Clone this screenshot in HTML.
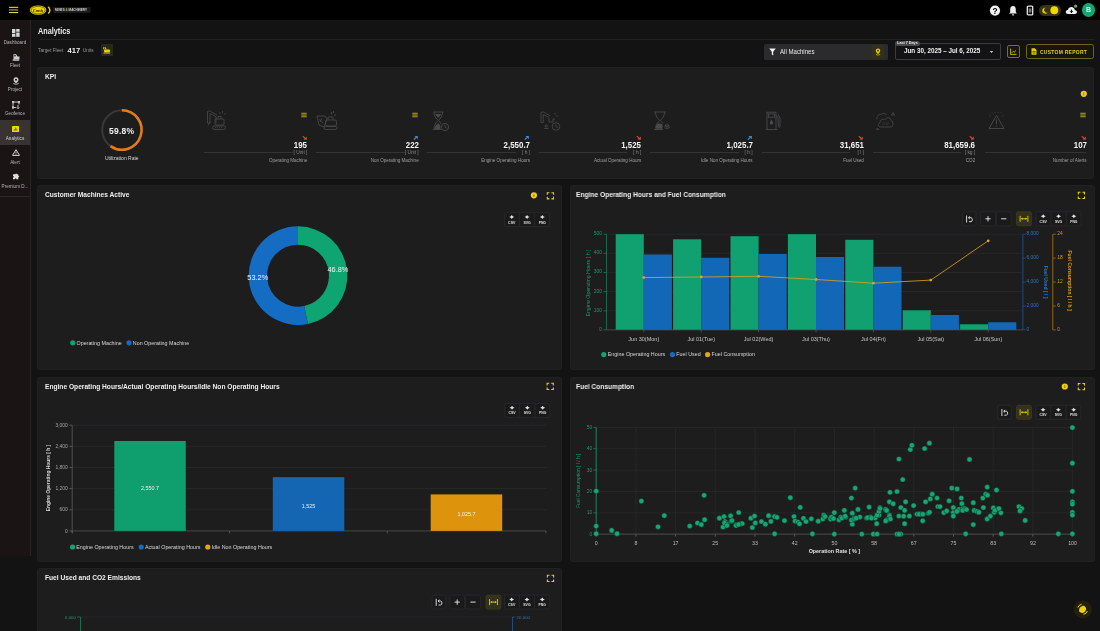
<!DOCTYPE html>
<html><head><meta charset="utf-8">
<style>
*{box-sizing:border-box;margin:0;padding:0}
html,body{width:1100px;height:631px;overflow:hidden;background:#131314;font-family:"Liberation Sans",sans-serif;color:#eee;position:relative}
.abs{position:absolute}
#top{position:absolute;left:0;top:0;width:1100px;height:20px;background:#000}
#side{position:absolute;left:0;top:20px;width:31px;height:536px;background:#1b1516;border-right:1px solid #2a2526}
.slbl{position:absolute;left:0;width:30px;text-align:center;font-size:4.6px;line-height:5px;color:#b8b8b8;white-space:nowrap}
.card{position:absolute;background:#1e1e1f;border:1px solid #222223;border-radius:2.5px}
.ctitle{position:absolute;left:7px;top:5px;font-size:7px;font-weight:bold;color:#f2f2f2;white-space:nowrap}
.kv{position:absolute;width:60px;text-align:right;font-size:9px;font-weight:bold;color:#f4f4f4;white-space:nowrap;transform:scaleX(0.88);transform-origin:100% 0;line-height:10px}
.ku{position:absolute;width:60px;text-align:right;font-size:4.8px;color:#8a8a8a;white-space:nowrap;line-height:6px}
.kl{position:absolute;width:100px;text-align:right;font-size:4.55px;color:#a0a0a0;white-space:nowrap;line-height:6px}
.ct{position:absolute;font-size:6.9px;font-weight:bold;color:#f0f0f0;white-space:nowrap;transform-origin:0 0;line-height:8.4px}
</style></head><body>
<div style="position:absolute;left:0;top:0;width:1100px;height:631px;overflow:hidden;will-change:transform;opacity:0.999">
<div id="top">
 <svg class="abs" style="left:9px;top:6px" width="10" height="8" viewBox="0 0 10 8"><rect x="0" y="0.8" width="9.2" height="1.1" fill="#e6d84e"/><rect x="0" y="3.4" width="9.2" height="1.1" fill="#b5ab45"/><rect x="0" y="6" width="9.2" height="1.1" fill="#e6d84e"/></svg>
 <svg class="abs" style="left:28px;top:4px" width="64" height="12" viewBox="0 0 64 12">
  <ellipse cx="10.1" cy="6.1" rx="8.3" ry="4.7" fill="#f2d600"/>
  <ellipse cx="10.1" cy="6.1" rx="7.1" ry="3.7" fill="none" stroke="#1a1600" stroke-width="0.5"/>
  <text x="10.1" y="7.7" font-size="4.4" font-style="italic" font-weight="bold" fill="#1a1600" text-anchor="middle" font-family="Liberation Serif" textLength="10" lengthAdjust="spacingAndGlyphs">Cmsh</text>
  <path d="M20.2 2.8 Q23.6 6.1 20.2 9.6" stroke="#e2d000" stroke-width="1.5" fill="none"/>
  <rect x="25" y="3.1" width="37.6" height="6" rx="1" fill="#1b1b1b"/>
  <text x="27" y="7.2" font-size="3.1" font-weight="bold" fill="#d6d6d6" font-family="Liberation Sans" textLength="32" lengthAdjust="spacingAndGlyphs">MINES <tspan fill="#b8c040">&amp;</tspan> MACHINERY</text>
 </svg>
 <svg class="abs" style="left:989px;top:5px" width="12" height="12" viewBox="0 0 12 12"><circle cx="6" cy="5.6" r="5.1" fill="#f4f4f4"/><text x="6" y="8.6" font-size="8.4" font-weight="bold" fill="#000" text-anchor="middle" font-family="Liberation Sans">?</text></svg>
 <svg class="abs" style="left:1008px;top:5px" width="10" height="11" viewBox="0 0 10 11"><path d="M5 1 C2.6 1 2.2 3 2.2 5 L2.2 7.3 L1 8.6 L9 8.6 L7.8 7.3 L7.8 5 C7.8 3 7.4 1 5 1Z" fill="#eee"/><rect x="4" y="9.2" width="2" height="1.2" rx="0.6" fill="#eee"/></svg>
 <svg class="abs" style="left:1026px;top:5px" width="8" height="11" viewBox="0 0 8 11"><rect x="1.3" y="1.2" width="5.4" height="8.6" rx="0.9" fill="none" stroke="#e8e8e8" stroke-width="1.3"/><rect x="2.6" y="3.4" width="2.8" height="4.2" fill="#7a7a7a"/></svg>
 <div class="abs" style="left:1039px;top:5px;width:22px;height:10.5px;border-radius:5.5px;background:#3b3612"></div>
 <svg class="abs" style="left:1040px;top:5px" width="20" height="11" viewBox="0 0 20 11"><path d="M5.8 2.8 A3 3 0 1 0 7.6 7.6 A2.4 2.4 0 1 1 5.8 2.8Z" fill="#e8d400"/><circle cx="14.3" cy="5.25" r="3.9" fill="#f2d800"/></svg>
 <svg class="abs" style="left:1065px;top:4px" width="13" height="12" viewBox="0 0 13 12"><path d="M3 10 C1 10 0.6 8.4 0.8 7.6 C1 6.6 2 6 2.9 6.1 C3.2 4 4.8 3 6.4 3 C8.3 3 9.6 4.4 9.8 6 C11 6 12 7 12 8 C12 9.2 11 10 10 10 Z" fill="#f0f0f0"/><path d="M6.4 5.6 L6.4 8.4 M5 7.2 L6.4 8.6 L7.8 7.2" stroke="#000" stroke-width="1" fill="none"/><circle cx="10.6" cy="2.2" r="1.6" fill="#7fa84a"/></svg>
 <div class="abs" style="left:1081.8px;top:3.4px;width:13.4px;height:13.4px;border-radius:50%;background:#16a675;color:#d8f5e6;font-size:7px;font-weight:bold;text-align:center;line-height:14.6px">B</div>
</div>
<div id="side">
 <div class="abs" style="left:0;top:100px;width:30px;height:24.5px;background:#3a3334"></div>
 <div class="abs" style="left:0;top:175.5px;width:30px;height:1px;background:#2e2829"></div>
 <svg class="abs" style="left:11.5px;top:8.5px" width="8" height="8" viewBox="0 0 8 8" fill="#d8d8d8"><rect x="0" y="0" width="3.4" height="4.3"/><rect x="0" y="5" width="3.4" height="2.8"/><rect x="4.2" y="0" width="3.4" height="2.8"/><rect x="4.2" y="3.5" width="3.4" height="4.3"/></svg>
 <div class="slbl" style="top:19.5px">Dashboard</div>
 <svg class="abs" style="left:11.5px;top:32.5px" width="8" height="8" viewBox="0 0 8 8"><path d="M1.5 6 L1.5 1 L4 1 L5.5 3.5 L7.5 3.5 L7.5 6 Z" fill="#cfcfcf"/><rect x="0.5" y="6.2" width="7" height="1.6" rx="0.8" fill="#cfcfcf"/><rect x="2.3" y="1.8" width="1.4" height="1.6" fill="#1b1516"/></svg>
 <div class="slbl" style="top:43.2px">Fleet</div>
 <svg class="abs" style="left:12px;top:56.5px" width="8" height="8" viewBox="0 0 8 8"><path d="M4 0.3 C2.4 0.3 1.5 1.5 1.5 2.8 C1.5 4.5 4 6.5 4 6.5 C4 6.5 6.5 4.5 6.5 2.8 C6.5 1.5 5.6 0.3 4 0.3Z" fill="#d0d0d0"/><circle cx="4" cy="2.8" r="1" fill="#1b1516"/><path d="M1.2 6.4 Q4 8.4 6.8 6.4" stroke="#d0d0d0" stroke-width="0.8" fill="none"/></svg>
 <div class="slbl" style="top:67.3px">Project</div>
 <svg class="abs" style="left:11.5px;top:80.5px" width="8" height="8" viewBox="0 0 8 8" fill="none" stroke="#cfcfcf" stroke-width="0.9"><path d="M1 1 L7 1 M1 1 L1 6.5 M7 1 L7 3.5 M1 6.5 L4 6.5"/><circle cx="1" cy="1" r="0.9" fill="#cfcfcf"/><circle cx="7" cy="1" r="0.9" fill="#cfcfcf"/><circle cx="1" cy="6.5" r="0.9" fill="#cfcfcf"/><path d="M6 4 L6 7.6 M4.8 6.4 L6 7.6 L7.2 6.4"/></svg>
 <div class="slbl" style="top:91.2px">Geofence</div>
 <div class="abs" style="left:11.8px;top:106px;width:7px;height:6px;background:#f2d800;border-radius:0.6px"></div>
 <svg class="abs" style="left:11.8px;top:106px" width="7" height="6" viewBox="0 0 7 6" stroke="#3a3300" stroke-width="0.6"><path d="M2.3 4.6 V3 M3.5 4.6 V1.6 M4.7 4.6 V2.6"/></svg>
 <div class="slbl" style="top:115.6px;color:#d4d4d4">Analytics</div>
 <svg class="abs" style="left:11.5px;top:128.5px" width="8" height="7" viewBox="0 0 8 7"><path d="M4 0.6 L7.5 6.4 L0.5 6.4 Z" fill="none" stroke="#e6e6e6" stroke-width="0.9" stroke-linejoin="round"/><rect x="3.6" y="2.6" width="0.8" height="2" fill="#e6e6e6"/><rect x="3.6" y="5" width="0.8" height="0.7" fill="#e6e6e6"/></svg>
 <div class="slbl" style="top:139.6px">Alert</div>
 <svg class="abs" style="left:11.5px;top:152.5px" width="8" height="8" viewBox="0 0 8 8"><path d="M2.5 1.3 L3.4 1.3 C3.4 0.2 4.9 0.2 4.9 1.3 L6.3 1.3 L6.3 2.8 C7.5 2.8 7.5 4.3 6.3 4.3 L6.3 6.3 L4.4 6.3 C4.4 5 2.9 5 2.9 6.3 L1 6.3 L1 4.4 C2.2 4.4 2.2 2.9 1 2.9 L1 1.3Z" fill="#e0e0e0"/></svg>
 <div class="slbl" style="top:163.9px">Premium D...</div>
</div>
<div class="abs" style="left:38px;top:25.5px;font-size:8.4px;font-weight:bold;color:#ececec;transform:scaleX(0.87);transform-origin:0 0">Analytics</div>
<div class="abs" style="left:39.8px;top:39px;width:1054px;height:1px;background:#232325"></div>
<div class="abs" style="left:38px;top:47.6px;font-size:4.8px;color:#9a9a9a">Target Fleet</div>
<div class="abs" style="left:67.5px;top:45.6px;font-size:7.6px;font-weight:bold;color:#f2f2f2">417</div>
<div class="abs" style="left:82.7px;top:47.6px;font-size:4.8px;color:#9a9a9a">Units</div>
<div class="abs" style="left:100.7px;top:43.6px;width:12px;height:12px;background:#2a2a1a;border-radius:1px"></div>
<svg class="abs" style="left:102.3px;top:45.6px" width="9" height="8" viewBox="0 0 9 8"><path d="M1.2 1.2 H3.6 L4.6 3.2 H1.2 Z" fill="#e8d000"/><rect x="2" y="3.6" width="6" height="2.6" rx="0.8" fill="#e8d000"/><rect x="1.4" y="6.4" width="6.8" height="1.2" rx="0.6" fill="#e8d000"/><rect x="1.9" y="1.7" width="1.2" height="1" fill="#2a2a1a"/></svg>

<!-- filter -->
<div class="abs" style="left:764px;top:43.5px;width:124px;height:16.5px;background:#2c2c2e;border-radius:1.5px"></div>
<svg class="abs" style="left:768.5px;top:47.5px" width="7" height="8" viewBox="0 0 7 8"><path d="M0.2 0.5 L6.8 0.5 L4.2 3.8 L4.2 7.5 L2.8 6.6 L2.8 3.8 Z" fill="#f4f4f4"/></svg>
<div class="abs" style="left:779.5px;top:47.9px;font-size:6.8px;color:#e8e8e8;transform:scaleX(0.896);transform-origin:0 0">All Machines</div>
<div class="abs" style="left:872px;top:45px;width:11.5px;height:13px;background:#34321c;border-radius:2px"></div>
<svg class="abs" style="left:874px;top:47.5px" width="8" height="8" viewBox="0 0 8 8"><path d="M4 0.5 C2.6 0.5 1.8 1.5 1.8 2.7 C1.8 4.2 4 6 4 6 C4 6 6.2 4.2 6.2 2.7 C6.2 1.5 5.4 0.5 4 0.5Z" fill="#e8d000"/><circle cx="4" cy="2.7" r="0.9" fill="#34321c"/><path d="M1.8 6.4 Q4 7.8 6.2 6.4" stroke="#e8d000" stroke-width="0.7" fill="none"/></svg>

<div class="abs" style="left:895px;top:43.2px;width:105.8px;height:16.5px;border:1px solid #3d3d3f;border-radius:2px;background:#141416"></div>
<div class="abs" style="left:894.9px;top:40.9px;width:25.1px;height:5.5px;border-radius:2.7px;background:#4a4a4c;font-size:3.7px;line-height:5.6px;text-align:center;color:#e8e8e8;font-weight:bold;white-space:nowrap">Last 7 Days</div>
<div class="abs" style="left:903.7px;top:46.8px;font-size:7px;font-weight:bold;color:#f0f0f0;white-space:nowrap;transform:scaleX(0.9);transform-origin:0 0">Jun 30, 2025 – Jul 6, 2025</div>
<svg class="abs" style="left:989px;top:49.5px" width="5" height="4" viewBox="0 0 5 4"><path d="M0.8 1 L4.2 1 L2.5 3 Z" fill="#ccc"/></svg>
<div class="abs" style="left:1007px;top:45.2px;width:13px;height:12.5px;border:1px solid #7a7020;border-radius:2px;background:#19190f"></div>
<svg class="abs" style="left:1010px;top:48px" width="7" height="7" viewBox="0 0 7 7" fill="none" stroke="#e8d000" stroke-width="0.8"><path d="M0.6 0.6 L0.6 6.4 L6.4 6.4"/><path d="M1.8 4.8 L3.2 3.4 L4.2 4.2 L6 2.4"/></svg>
<div class="abs" style="left:1026px;top:44.2px;width:68px;height:14.8px;border:1px solid #6e6620;border-radius:2.5px;background:#17170f"></div>
<svg class="abs" style="left:1030.5px;top:48px" width="6" height="7" viewBox="0 0 6 7"><path d="M0.5 0.3 L3.8 0.3 L5.5 2 L5.5 6.7 L0.5 6.7 Z" fill="#e8d000"/><path d="M1.5 3.5 H4.5 M1.5 5 H4.5" stroke="#17170f" stroke-width="0.6"/></svg>
<div class="abs" style="left:1040.4px;top:48.6px;font-size:5.6px;font-weight:bold;color:#e3cf10;letter-spacing:0.3px;white-space:nowrap;transform:scaleX(0.89);transform-origin:0 0">CUSTOM REPORT</div>

<div class="card" style="left:37px;top:67px;width:1057px;height:112px"></div>
<div class="ct" style="left:44.9px;top:72.6px;transform:scaleX(0.962)">KPI</div>
<svg class="abs" style="left:0;top:0;overflow:visible" width="1" height="1"><circle cx="121.9" cy="130" r="19.7" fill="none" stroke="#3a3a3b" stroke-width="2"/><path d="M121.9 110.3 A19.7 19.7 0 1 1 110.52 146.08" fill="none" stroke="#e27d1e" stroke-width="2.6"/></svg>
<div class="abs" style="left:108.8px;top:124.6px;font-size:9.7px;font-weight:bold;color:#f2f2f2;white-space:nowrap;letter-spacing:0.25px;transform:scaleX(0.88);transform-origin:0 0">59.8%</div>
<div class="abs" style="left:105px;top:154.5px;font-size:5px;color:#d8d8d8;white-space:nowrap">Utilization Rate</div>
<svg class="abs" style="left:205.5px;top:110px" width="22" height="21" viewBox="0 0 22 21" fill="none" stroke="#4b4b4c" stroke-width="0.8"><path d="M1.5 1.5 L1.5 13 L4 13 L4 3.5 L10 6.5 L10 13"/><path d="M1.5 1.5 L3.5 0.8 L11 5"/><path d="M4 13 L2 15.5"/><rect x="9" y="9" width="9" height="6" rx="1"/><path d="M12 9 L12 6.5 L15 6.5 L15 9"/><rect x="6.5" y="16" width="13" height="3.5" rx="1.7"/><path d="M9 17.7 H17" stroke-dasharray="1 1"/><path d="M14 2 V4 M16.5 1 V3.5 M19 3 V5" stroke-width="0.7"/></svg>
<svg class="abs" style="left:301.0px;top:112.4px" width="6" height="6" viewBox="0 0 6 6" fill="#d8c814"><rect x="0.3" y="0.8" width="5.4" height="0.8"/><rect x="0.3" y="2.6" width="5.4" height="0.8"/><rect x="0.3" y="4.4" width="5.4" height="0.8"/></svg>
<svg class="abs" style="left:301.6px;top:134.6px" width="6" height="6" viewBox="0 0 6 6"><path d="M0.9 1.2 L3.2 3.5" stroke="#e2452f" stroke-width="1.2"/><path d="M4.8 1.6 L4.8 4.8 L1.6 4.8 Z" fill="#e2452f"/></svg>
<div class="kv" style="left:247.4px;top:140.2px">195</div>
<div class="abs" style="left:204.0px;top:152.4px;width:89.4px;height:0.8px;background:#353536"></div>
<div class="ku" style="left:247.4px;top:149.7px">[ Unit ]</div>
<div class="kl" style="left:207.4px;top:157.6px">Operating Machine</div>
<svg class="abs" style="left:316.0px;top:110px" width="24" height="21" viewBox="0 0 24 21" fill="none" stroke="#4b4b4c" stroke-width="0.8"><path d="M1 6 L9 6 L11 9 L8 17 L3 15 Z"/><path d="M3.5 9 L7 13 M6 8.5 L4 12"/><rect x="9.5" y="10" width="11" height="6" rx="1.5"/><path d="M12 10 V7 H17 V10"/><rect x="8" y="16.5" width="13" height="3" rx="1.5"/><path d="M15.5 2 V4.5 M17.5 1 V3 M19 4 V6" stroke-width="0.9"/></svg>
<svg class="abs" style="left:412.3px;top:112.4px" width="6" height="6" viewBox="0 0 6 6" fill="#d8c814"><rect x="0.3" y="0.8" width="5.4" height="0.8"/><rect x="0.3" y="2.6" width="5.4" height="0.8"/><rect x="0.3" y="4.4" width="5.4" height="0.8"/></svg>
<svg class="abs" style="left:412.9px;top:134.6px" width="6" height="6" viewBox="0 0 6 6"><path d="M0.9 4.6 L3.2 2.3" stroke="#3d93dc" stroke-width="1.2"/><path d="M4.8 4.2 L4.8 1 L1.6 1 Z" fill="#3d93dc"/></svg>
<div class="kv" style="left:358.7px;top:140.2px">222</div>
<div class="abs" style="left:315.6px;top:152.4px;width:89.1px;height:0.8px;background:#353536"></div>
<div class="ku" style="left:358.7px;top:149.7px">[ Unit ]</div>
<div class="kl" style="left:318.7px;top:157.6px">Non Operating Machine</div>
<svg class="abs" style="left:431.5px;top:111px" width="18" height="21" viewBox="0 0 18 21" fill="none" stroke="#4b4b4c" stroke-width="0.9"><path d="M1 1 H11.5 M1 18.5 H9"/><path d="M2 1.2 C2 5 4 7.5 6 9.5 C4 11.5 2 14 2 18.3 M10.5 1.2 C10.5 5 8.5 7.5 6.5 9.5 C7.5 10.5 8.5 11.5 9 13"/><path d="M3 3 H9.5 L6.2 7 Z" fill="#4b4b4c" stroke="none"/><path d="M2.6 18 C2.8 15 4.5 13.2 6.2 12.5 C7.5 13 8 14 8.3 15 L8.3 18 Z" fill="#4b4b4c" stroke="none"/><circle cx="13" cy="16" r="3.6"/><path d="M13 14 V16.2 L14.5 17"/></svg>
<svg class="abs" style="left:524.2px;top:134.6px" width="6" height="6" viewBox="0 0 6 6"><path d="M0.9 4.6 L3.2 2.3" stroke="#3d93dc" stroke-width="1.2"/><path d="M4.8 4.2 L4.8 1 L1.6 1 Z" fill="#3d93dc"/></svg>
<div class="kv" style="left:470.0px;top:140.2px">2,550.7</div>
<div class="abs" style="left:427.1px;top:152.4px;width:88.9px;height:0.8px;background:#353536"></div>
<div class="ku" style="left:470.0px;top:149.7px">[ h ]</div>
<div class="kl" style="left:430.0px;top:157.6px">Engine Operating Hours</div>
<svg class="abs" style="left:539.5px;top:111px" width="23" height="21" viewBox="0 0 23 21" fill="none" stroke="#4b4b4c" stroke-width="0.8"><path d="M1 1.5 L1 11.5 L3.2 11.5 L3.2 3.5 L9 6.5 L9 11"/><path d="M1 1.5 L3 0.8 L10.5 5"/><path d="M9 11 L13 11 L13 8 L15 8"/><path d="M5 15 C5 13.5 7.5 13.5 7.5 15 C7.5 16.5 5 16.5 5 15" /><path d="M4 17.5 H8.5"/><circle cx="16" cy="15.5" r="3.8"/><path d="M16 13.5 V15.7 L17.5 16.5"/><path d="M15 2 V3.5 M17 4 V5.5" stroke-width="0.9"/></svg>
<svg class="abs" style="left:635.5px;top:134.6px" width="6" height="6" viewBox="0 0 6 6"><path d="M0.9 1.2 L3.2 3.5" stroke="#e2452f" stroke-width="1.2"/><path d="M4.8 1.6 L4.8 4.8 L1.6 4.8 Z" fill="#e2452f"/></svg>
<div class="kv" style="left:581.3px;top:140.2px">1,525</div>
<div class="abs" style="left:538.6px;top:152.4px;width:88.6px;height:0.8px;background:#353536"></div>
<div class="ku" style="left:581.3px;top:149.7px">[ h ]</div>
<div class="kl" style="left:541.3px;top:157.6px">Actual Operating Hours</div>
<svg class="abs" style="left:653.2px;top:111px" width="19" height="20" viewBox="0 0 19 20" fill="none" stroke="#4b4b4c" stroke-width="0.9"><path d="M1 1 H13"/><path d="M2.5 1.2 C2.5 5 4.5 7.5 6.8 9.5 C4.5 11.5 2.5 14 2.5 17.5 M11.5 1.2 C11.5 5 9.5 7.5 7.2 9.5 C8.5 10.5 9.3 11.5 9.8 12.5"/><path d="M1 18.5 H10"/><path d="M3 17.8 L3 14.5 C4 13 5.5 12.5 7 12.5 L9.5 13.5 L9.5 17.8 Z" fill="#4b4b4c" stroke="none"/><circle cx="14" cy="15.5" r="2" stroke-dasharray="1 0.6" stroke-width="1.4"/><circle cx="14" cy="15.5" r="0.6" fill="#4b4b4c"/></svg>
<svg class="abs" style="left:746.8px;top:134.6px" width="6" height="6" viewBox="0 0 6 6"><path d="M0.9 4.6 L3.2 2.3" stroke="#3d93dc" stroke-width="1.2"/><path d="M4.8 4.2 L4.8 1 L1.6 1 Z" fill="#3d93dc"/></svg>
<div class="kv" style="left:692.6px;top:140.2px">1,025.7</div>
<div class="abs" style="left:650.2px;top:152.4px;width:88.4px;height:0.8px;background:#353536"></div>
<div class="ku" style="left:692.6px;top:149.7px">[ h ]</div>
<div class="kl" style="left:652.6px;top:157.6px">Idle Non Operating Hours</div>
<svg class="abs" style="left:765.0px;top:111px" width="19" height="20" viewBox="0 0 19 20" fill="none" stroke="#4b4b4c" stroke-width="0.9"><path d="M2 18 V1.2 H11 V18"/><path d="M0.8 18.5 H12.5"/><rect x="3.5" y="3" width="6" height="3.2"/><path d="M6.5 8.5 C5.3 10.3 4.8 11 4.8 12 C4.8 13 5.5 13.6 6.5 13.6 C7.5 13.6 8.2 13 8.2 12 C8.2 11 7.7 10.3 6.5 8.5Z" fill="#4b4b4c" stroke="none"/><path d="M11 5 L13 6.5 L13.5 15.5 C13.5 16.8 15 16.8 15 15.5 L15 7 L13 3.5"/></svg>
<svg class="abs" style="left:858.1px;top:134.6px" width="6" height="6" viewBox="0 0 6 6"><path d="M0.9 1.2 L3.2 3.5" stroke="#e2452f" stroke-width="1.2"/><path d="M4.8 1.6 L4.8 4.8 L1.6 4.8 Z" fill="#e2452f"/></svg>
<div class="kv" style="left:803.9px;top:140.2px">31,651</div>
<div class="abs" style="left:761.8px;top:152.4px;width:88.1px;height:0.8px;background:#353536"></div>
<div class="ku" style="left:803.9px;top:149.7px">[ l ]</div>
<div class="kl" style="left:763.9px;top:157.6px">Fuel Used</div>
<svg class="abs" style="left:874.5px;top:111px" width="21" height="19" viewBox="0 0 21 19" fill="none" stroke="#4b4b4c" stroke-width="0.8"><path d="M5.5 16 C3 16 2.6 12.5 5 12 C4.8 8.8 8 7.5 10 8.8 C11 6 15.5 6 16 9.5 C18.5 9.8 18.8 16 16 16 Z"/><path d="M2 8.5 C1.5 5.5 3.5 3 6.5 3.3 C8 2 10.5 2.2 11.5 4"/><text x="7" y="14.2" font-size="3.4" font-family="Liberation Sans" fill="#4b4b4c" stroke="none">CO2</text><path d="M18 1.5 L19.5 4 L16.5 4 Z"/><path d="M2.5 17 L4 19 L1 19Z"/></svg>
<svg class="abs" style="left:969.4px;top:134.6px" width="6" height="6" viewBox="0 0 6 6"><path d="M0.9 1.2 L3.2 3.5" stroke="#e2452f" stroke-width="1.2"/><path d="M4.8 1.6 L4.8 4.8 L1.6 4.8 Z" fill="#e2452f"/></svg>
<div class="kv" style="left:915.2px;top:140.2px">81,659.6</div>
<div class="abs" style="left:873.3px;top:152.4px;width:87.9px;height:0.8px;background:#353536"></div>
<div class="ku" style="left:915.2px;top:149.7px">[ kg ]</div>
<div class="kl" style="left:875.2px;top:157.6px">CO2</div>
<svg class="abs" style="left:987.5px;top:111px" width="18" height="19" viewBox="0 0 18 19" fill="none" stroke="#4b4b4c" stroke-width="0.9"><path d="M8.5 4.5 L16 17.5 L1 17.5 Z" stroke-linejoin="round"/><path d="M8.5 8.5 V13.2 M8.5 14.6 V15.6"/><path d="M4 1.5 L5 2.5 M13 1.5 L12 2.5 M1.5 4.5 L2.8 5.2 M15.5 4.5 L14.2 5.2 M7 0.8 V2 M10 0.8 V2" stroke-width="0.7"/></svg>
<svg class="abs" style="left:1080.1px;top:112.4px" width="6" height="6" viewBox="0 0 6 6" fill="#d8c814"><rect x="0.3" y="0.8" width="5.4" height="0.8"/><rect x="0.3" y="2.6" width="5.4" height="0.8"/><rect x="0.3" y="4.4" width="5.4" height="0.8"/></svg>
<svg class="abs" style="left:1080.7px;top:134.6px" width="6" height="6" viewBox="0 0 6 6"><path d="M0.9 1.2 L3.2 3.5" stroke="#e2452f" stroke-width="1.2"/><path d="M4.8 1.6 L4.8 4.8 L1.6 4.8 Z" fill="#e2452f"/></svg>
<div class="kv" style="left:1026.5px;top:140.2px">107</div>
<div class="abs" style="left:984.9px;top:152.4px;width:101.6px;height:0.8px;background:#353536"></div>
<div class="kl" style="left:986.5px;top:157.6px">Number of Alerts</div>
<svg class="abs" style="left:1080px;top:90.4px" width="8" height="8" viewBox="0 0 8 8"><circle cx="3.8" cy="3.8" r="3.1" fill="#efd20a"/><rect x="3.4" y="3.4" width="0.8" height="1.9" fill="#6a5a00"/><rect x="3.4" y="2.2" width="0.8" height="0.7" fill="#6a5a00"/></svg>
<div class="card" style="left:37px;top:185px;width:525px;height:185px"></div>
<div class="ct" style="left:44.9px;top:191.1px;transform:scaleX(0.962)">Customer Machines Active</div>
<div class="card" style="left:570px;top:185px;width:524.5px;height:185px"></div>
<div class="ct" style="left:576.2px;top:191.1px;transform:scaleX(0.962)">Engine Operating Hours and Fuel Consumption</div>
<div class="card" style="left:37px;top:377px;width:525px;height:185px"></div>
<div class="ct" style="left:44.9px;top:383.1px;transform:scaleX(0.962)">Engine Operating Hours/Actual Operating Hours/Idle Non Operating Hours</div>
<div class="card" style="left:570px;top:377px;width:524.5px;height:185px"></div>
<div class="ct" style="left:576.2px;top:383.1px;transform:scaleX(0.962)">Fuel Consumption</div>
<div class="card" style="left:37px;top:568px;width:525px;height:80px"></div>
<div class="ct" style="left:44.9px;top:574.1px;transform:scaleX(0.962)">Fuel Used and CO2 Emissions</div>
<svg class="abs" style="left:0;top:0" width="1100" height="631" viewBox="0 0 1100 631" font-family="Liberation Sans"><circle cx="533.9" cy="195.3" r="3.1" fill="#efd20a"/><rect x="533.5" y="195.0" width="0.8" height="1.8" fill="#6a5a00"/><rect x="533.5" y="193.8" width="0.8" height="0.7" fill="#6a5a00"/>
<g transform="translate(546.8,192.2)" fill="none" stroke="#e6cf18" stroke-width="1.1"><path d="M0.5 2.6 V0.5 H2.6 M4.6 0.5 H6.7 V2.6 M6.7 4.6 V6.7 H4.6 M2.6 6.7 H0.5 V4.6"/></g>
<rect x="504.6" y="212.6" width="44.900000000000006" height="14" rx="1.5" fill="#1b1b1c" stroke="#2c2c2e" stroke-width="0.8"/>
<line x1="519.4" y1="213.1" x2="519.4" y2="226.1" stroke="#2c2c2e" stroke-width="0.8"/>
<line x1="534.7" y1="213.1" x2="534.7" y2="226.1" stroke="#2c2c2e" stroke-width="0.8"/>
<path d="M511.75 215.0 Q512.35 216.5 514.25 217.0 Q512.35 217.5 511.75 219.0 Q511.15 217.5 509.25 217.0 Q511.15 216.5 511.75 215.0 Z" fill="#e4e4e4"/>
<text x="511.75" y="223.6" font-size="4.1" font-weight="bold" fill="#e0e0e0" text-anchor="middle" textLength="7.3" lengthAdjust="spacingAndGlyphs">CSV</text>
<path d="M527.05 215.0 Q527.65 216.5 529.55 217.0 Q527.65 217.5 527.05 219.0 Q526.4499999999999 217.5 524.55 217.0 Q526.4499999999999 216.5 527.05 215.0 Z" fill="#e4e4e4"/>
<text x="527.05" y="223.6" font-size="4.1" font-weight="bold" fill="#e0e0e0" text-anchor="middle" textLength="7.3" lengthAdjust="spacingAndGlyphs">SVG</text>
<path d="M542.35 215.0 Q542.95 216.5 544.85 217.0 Q542.95 217.5 542.35 219.0 Q541.75 217.5 539.85 217.0 Q541.75 216.5 542.35 215.0 Z" fill="#e4e4e4"/>
<text x="542.35" y="223.6" font-size="4.1" font-weight="bold" fill="#e0e0e0" text-anchor="middle" textLength="7.3" lengthAdjust="spacingAndGlyphs">PNG</text>
<path d="M298.00 226.35 A49.3 49.3 0 0 1 307.85 323.96 L304.19 306.03 A31 31 0 0 0 298.00 244.65 Z" fill="#10a674"/>
<path d="M307.85 323.96 A49.3 49.3 0 1 1 298.00 226.35 L298.00 244.65 A31 31 0 1 0 304.19 306.03 Z" fill="#156ec4"/>
<text x="337.9" y="272.4" font-size="7.4" fill="#f4f4f4" text-anchor="middle">46.8%</text>
<text x="257.8" y="279.9" font-size="7.4" fill="#f4f4f4" text-anchor="middle">53.2%</text>
<circle cx="72.8" cy="342.8" r="2.6" fill="#10a674"/>
<text x="76.5" y="344.6" font-size="5.35" fill="#dadada">Operating Machine</text>
<circle cx="129" cy="342.8" r="2.6" fill="#156ec4"/>
<text x="132.8" y="344.6" font-size="5.35" fill="#dadada">Non Operating Machine</text>
<g transform="translate(1077.8,191.8)" fill="none" stroke="#e6cf18" stroke-width="1.1"><path d="M0.5 2.6 V0.5 H2.6 M4.6 0.5 H6.7 V2.6 M6.7 4.6 V6.7 H4.6 M2.6 6.7 H0.5 V4.6"/></g>
<rect x="962.5" y="211.8" width="13.6" height="14" rx="1.5" fill="#1b1b1c" stroke="#2c2c2e" stroke-width="0.8"/>
<g transform="translate(966,215.5)" fill="none" stroke="#d6d6d6" stroke-width="1"><path d="M0.6 0 V7"/><path d="M2.6 2.2 H5 C6.8 2.2 6.8 6.2 5 6.2 H3"/><path d="M3.8 0.9 L2.4 2.2 L3.8 3.5"/></g>
<rect x="980.6" y="211.8" width="14.8" height="14" rx="1.5" fill="#1b1b1c" stroke="#2c2c2e" stroke-width="0.8"/>
<rect x="996.4" y="211.8" width="14.8" height="14" rx="1.5" fill="#1b1b1c" stroke="#2c2c2e" stroke-width="0.8"/>
<path d="M985.4 218.8 H990.6 M988.0 216.20000000000002 V221.4" stroke="#dedede" stroke-width="1"/>
<path d="M1001.1999999999999 218.8 H1006.4" stroke="#dedede" stroke-width="1"/>
<rect x="1016.5" y="211.8" width="14.9" height="14" rx="1.5" fill="#34331c" stroke="#3e3d22" stroke-width="0.8"/>
<path d="M1020.1 215.8 V221.8 M1027.9 215.8 V221.8 M1021.4 218.8 H1026.6" stroke="#efd20a" stroke-width="0.9"/><path d="M1021 218.8 L1022.5 217.60000000000002 V220.0Z M1027 218.8 L1025.5 217.60000000000002 V220.0Z" fill="#efd20a"/>
<rect x="1036.1" y="211.8" width="44.900000000000006" height="14" rx="1.5" fill="#1b1b1c" stroke="#2c2c2e" stroke-width="0.8"/>
<line x1="1050.8999999999999" y1="212.3" x2="1050.8999999999999" y2="225.3" stroke="#2c2c2e" stroke-width="0.8"/>
<line x1="1066.1999999999998" y1="212.3" x2="1066.1999999999998" y2="225.3" stroke="#2c2c2e" stroke-width="0.8"/>
<path d="M1043.25 214.20000000000002 Q1043.85 215.70000000000002 1045.75 216.20000000000002 Q1043.85 216.70000000000002 1043.25 218.20000000000002 Q1042.65 216.70000000000002 1040.75 216.20000000000002 Q1042.65 215.70000000000002 1043.25 214.20000000000002 Z" fill="#e4e4e4"/>
<text x="1043.25" y="222.8" font-size="4.1" font-weight="bold" fill="#e0e0e0" text-anchor="middle" textLength="7.3" lengthAdjust="spacingAndGlyphs">CSV</text>
<path d="M1058.55 214.20000000000002 Q1059.1499999999999 215.70000000000002 1061.05 216.20000000000002 Q1059.1499999999999 216.70000000000002 1058.55 218.20000000000002 Q1057.95 216.70000000000002 1056.05 216.20000000000002 Q1057.95 215.70000000000002 1058.55 214.20000000000002 Z" fill="#e4e4e4"/>
<text x="1058.55" y="222.8" font-size="4.1" font-weight="bold" fill="#e0e0e0" text-anchor="middle" textLength="7.3" lengthAdjust="spacingAndGlyphs">SVG</text>
<path d="M1073.85 214.20000000000002 Q1074.4499999999998 215.70000000000002 1076.35 216.20000000000002 Q1074.4499999999998 216.70000000000002 1073.85 218.20000000000002 Q1073.25 216.70000000000002 1071.35 216.20000000000002 Q1073.25 215.70000000000002 1073.85 214.20000000000002 Z" fill="#e4e4e4"/>
<text x="1073.85" y="222.8" font-size="4.1" font-weight="bold" fill="#e0e0e0" text-anchor="middle" textLength="7.3" lengthAdjust="spacingAndGlyphs">PNG</text>
<line x1="606.5" y1="329.9" x2="1022.9" y2="329.9" stroke="#2d2d2f" stroke-width="0.7"/>
<line x1="603.5" y1="329.9" x2="606.5" y2="329.9" stroke="#1c8a60" stroke-width="0.7"/>
<text x="601.9" y="330.8" font-size="4.9" fill="#1c9a6c" text-anchor="end">0</text>
<line x1="606.5" y1="310.8" x2="1022.9" y2="310.8" stroke="#2d2d2f" stroke-width="0.7"/>
<line x1="603.5" y1="310.8" x2="606.5" y2="310.8" stroke="#1c8a60" stroke-width="0.7"/>
<text x="601.9" y="311.7" font-size="4.9" fill="#1c9a6c" text-anchor="end">100</text>
<line x1="606.5" y1="291.6" x2="1022.9" y2="291.6" stroke="#2d2d2f" stroke-width="0.7"/>
<line x1="603.5" y1="291.6" x2="606.5" y2="291.6" stroke="#1c8a60" stroke-width="0.7"/>
<text x="601.9" y="292.5" font-size="4.9" fill="#1c9a6c" text-anchor="end">200</text>
<line x1="606.5" y1="272.5" x2="1022.9" y2="272.5" stroke="#2d2d2f" stroke-width="0.7"/>
<line x1="603.5" y1="272.5" x2="606.5" y2="272.5" stroke="#1c8a60" stroke-width="0.7"/>
<text x="601.9" y="273.4" font-size="4.9" fill="#1c9a6c" text-anchor="end">300</text>
<line x1="606.5" y1="253.3" x2="1022.9" y2="253.3" stroke="#2d2d2f" stroke-width="0.7"/>
<line x1="603.5" y1="253.3" x2="606.5" y2="253.3" stroke="#1c8a60" stroke-width="0.7"/>
<text x="601.9" y="254.2" font-size="4.9" fill="#1c9a6c" text-anchor="end">400</text>
<line x1="606.5" y1="234.2" x2="1022.9" y2="234.2" stroke="#2d2d2f" stroke-width="0.7"/>
<line x1="603.5" y1="234.2" x2="606.5" y2="234.2" stroke="#1c8a60" stroke-width="0.7"/>
<text x="601.9" y="235.1" font-size="4.9" fill="#1c9a6c" text-anchor="end">500</text>
<line x1="606.5" y1="234.2" x2="606.5" y2="329.9" stroke="#1c7a58" stroke-width="0.8"/>
<text transform="translate(589.6 283.04999999999995) rotate(-90)" font-size="5.3" fill="#1c9a6c" text-anchor="middle">Engine Operating Hours [ h ]</text>
<rect x="615.70" y="234.2" width="28.1" height="95.70" fill="#12a271"/>
<rect x="643.80" y="254.5" width="28.1" height="75.40" fill="#1468b8"/>
<line x1="643.80" y1="329.9" x2="643.80" y2="332.4" stroke="#666" stroke-width="0.6"/>
<text x="643.80" y="340.9" font-size="5.5" fill="#c8c8c8" text-anchor="middle">Jun 30(Mon)</text>
<rect x="673.10" y="239.3" width="28.1" height="90.60" fill="#12a271"/>
<rect x="701.20" y="257.8" width="28.1" height="72.10" fill="#1468b8"/>
<line x1="701.20" y1="329.9" x2="701.20" y2="332.4" stroke="#666" stroke-width="0.6"/>
<text x="701.20" y="340.9" font-size="5.5" fill="#c8c8c8" text-anchor="middle">Jul 01(Tue)</text>
<rect x="730.50" y="236.2" width="28.1" height="93.70" fill="#12a271"/>
<rect x="758.60" y="254.0" width="28.1" height="75.90" fill="#1468b8"/>
<line x1="758.60" y1="329.9" x2="758.60" y2="332.4" stroke="#666" stroke-width="0.6"/>
<text x="758.60" y="340.9" font-size="5.5" fill="#c8c8c8" text-anchor="middle">Jul 02(Wed)</text>
<rect x="787.90" y="234.2" width="28.1" height="95.70" fill="#12a271"/>
<rect x="816.00" y="257.0" width="28.1" height="72.90" fill="#1468b8"/>
<line x1="816.00" y1="329.9" x2="816.00" y2="332.4" stroke="#666" stroke-width="0.6"/>
<text x="816.00" y="340.9" font-size="5.5" fill="#c8c8c8" text-anchor="middle">Jul 03(Thu)</text>
<rect x="845.30" y="239.8" width="28.1" height="90.10" fill="#12a271"/>
<rect x="873.40" y="266.7" width="28.1" height="63.20" fill="#1468b8"/>
<line x1="873.40" y1="329.9" x2="873.40" y2="332.4" stroke="#666" stroke-width="0.6"/>
<text x="873.40" y="340.9" font-size="5.5" fill="#c8c8c8" text-anchor="middle">Jul 04(Fri)</text>
<rect x="902.70" y="310.3" width="28.1" height="19.60" fill="#12a271"/>
<rect x="930.80" y="315.0" width="28.1" height="14.90" fill="#1468b8"/>
<line x1="930.80" y1="329.9" x2="930.80" y2="332.4" stroke="#666" stroke-width="0.6"/>
<text x="930.80" y="340.9" font-size="5.5" fill="#c8c8c8" text-anchor="middle">Jul 05(Sat)</text>
<rect x="960.10" y="324.3" width="28.1" height="5.60" fill="#12a271"/>
<rect x="988.20" y="322.3" width="28.1" height="7.60" fill="#1468b8"/>
<line x1="988.20" y1="329.9" x2="988.20" y2="332.4" stroke="#666" stroke-width="0.6"/>
<text x="988.20" y="340.9" font-size="5.5" fill="#c8c8c8" text-anchor="middle">Jul 06(Sun)</text>
<line x1="606.5" y1="329.9" x2="1022.9" y2="329.9" stroke="#555" stroke-width="0.7"/>
<polyline points="643.8,277.6 701.2,277.0 758.6,276.3 816.0,279.5 873.4,283.2 930.8,280.1 988.2,240.8" fill="none" stroke="#e3a51a" stroke-width="0.8"/>
<circle cx="643.8" cy="277.6" r="1.4" fill="#e3a51a"/>
<circle cx="701.2" cy="277.0" r="1.4" fill="#e3a51a"/>
<circle cx="758.6" cy="276.3" r="1.4" fill="#e3a51a"/>
<circle cx="816.0" cy="279.5" r="1.4" fill="#e3a51a"/>
<circle cx="873.4" cy="283.2" r="1.4" fill="#e3a51a"/>
<circle cx="930.8" cy="280.1" r="1.4" fill="#e3a51a"/>
<circle cx="988.2" cy="240.8" r="1.4" fill="#e3a51a"/>
<line x1="1022.9" y1="234.2" x2="1022.9" y2="329.9" stroke="#1d5c94" stroke-width="0.8"/>
<line x1="1022.9" y1="329.9" x2="1025.9" y2="329.9" stroke="#1d5c94" stroke-width="0.7"/>
<text x="1026.5" y="330.5" font-size="4.9" fill="#2d76c0">0</text>
<line x1="1022.9" y1="306.0" x2="1025.9" y2="306.0" stroke="#1d5c94" stroke-width="0.7"/>
<text x="1026.5" y="306.6" font-size="4.9" fill="#2d76c0">2,000</text>
<line x1="1022.9" y1="282.0" x2="1025.9" y2="282.0" stroke="#1d5c94" stroke-width="0.7"/>
<text x="1026.5" y="282.6" font-size="4.9" fill="#2d76c0">4,000</text>
<line x1="1022.9" y1="258.1" x2="1025.9" y2="258.1" stroke="#1d5c94" stroke-width="0.7"/>
<text x="1026.5" y="258.7" font-size="4.9" fill="#2d76c0">6,000</text>
<line x1="1022.9" y1="234.2" x2="1025.9" y2="234.2" stroke="#1d5c94" stroke-width="0.7"/>
<text x="1026.5" y="234.8" font-size="4.9" fill="#2d76c0">8,000</text>
<text transform="translate(1044.4 282.04999999999995) rotate(90)" font-size="5" fill="#2d76c0" text-anchor="middle" font-weight="bold">Fuel Used [ l ]</text>
<line x1="1052.8" y1="234.2" x2="1052.8" y2="329.9" stroke="#b07a10" stroke-width="0.8"/>
<line x1="1052.8" y1="329.9" x2="1055.8" y2="329.9" stroke="#b07a10" stroke-width="0.7"/>
<text x="1057.3" y="330.5" font-size="4.9" fill="#d99a14">0</text>
<line x1="1052.8" y1="306.0" x2="1055.8" y2="306.0" stroke="#b07a10" stroke-width="0.7"/>
<text x="1057.3" y="306.6" font-size="4.9" fill="#d99a14">6</text>
<line x1="1052.8" y1="282.0" x2="1055.8" y2="282.0" stroke="#b07a10" stroke-width="0.7"/>
<text x="1057.3" y="282.6" font-size="4.9" fill="#d99a14">12</text>
<line x1="1052.8" y1="258.1" x2="1055.8" y2="258.1" stroke="#b07a10" stroke-width="0.7"/>
<text x="1057.3" y="258.7" font-size="4.9" fill="#d99a14">18</text>
<line x1="1052.8" y1="234.2" x2="1055.8" y2="234.2" stroke="#b07a10" stroke-width="0.7"/>
<text x="1057.3" y="234.8" font-size="4.9" fill="#d99a14">24</text>
<text transform="translate(1068.4 280.54999999999995) rotate(90)" font-size="5" fill="#d99a14" text-anchor="middle" font-weight="bold">Fuel Consumption [ l / h ]</text>
<circle cx="603.8" cy="354.6" r="2.6" fill="#12a675"/>
<text x="607.8" y="356.40000000000003" font-size="5.35" fill="#dadada">Engine Operating Hours</text>
<circle cx="672.5" cy="354.6" r="2.6" fill="#156ec4"/>
<text x="676.3" y="356.40000000000003" font-size="5.35" fill="#dadada">Fuel Used</text>
<circle cx="707.6" cy="354.6" r="2.6" fill="#eaa516"/>
<text x="711.6" y="356.40000000000003" font-size="5.35" fill="#dadada">Fuel Consumption</text>
<g transform="translate(546.6,382.8)" fill="none" stroke="#e6cf18" stroke-width="1.1"><path d="M0.5 2.6 V0.5 H2.6 M4.6 0.5 H6.7 V2.6 M6.7 4.6 V6.7 H4.6 M2.6 6.7 H0.5 V4.6"/></g>
<rect x="504.9" y="403.4" width="44.900000000000006" height="14" rx="1.5" fill="#1b1b1c" stroke="#2c2c2e" stroke-width="0.8"/>
<line x1="519.6999999999999" y1="403.9" x2="519.6999999999999" y2="416.9" stroke="#2c2c2e" stroke-width="0.8"/>
<line x1="535.0" y1="403.9" x2="535.0" y2="416.9" stroke="#2c2c2e" stroke-width="0.8"/>
<path d="M512.05 405.79999999999995 Q512.65 407.29999999999995 514.55 407.79999999999995 Q512.65 408.29999999999995 512.05 409.79999999999995 Q511.44999999999993 408.29999999999995 509.54999999999995 407.79999999999995 Q511.44999999999993 407.29999999999995 512.05 405.79999999999995 Z" fill="#e4e4e4"/>
<text x="512.05" y="414.4" font-size="4.1" font-weight="bold" fill="#e0e0e0" text-anchor="middle" textLength="7.3" lengthAdjust="spacingAndGlyphs">CSV</text>
<path d="M527.3499999999999 405.79999999999995 Q527.9499999999999 407.29999999999995 529.8499999999999 407.79999999999995 Q527.9499999999999 408.29999999999995 527.3499999999999 409.79999999999995 Q526.7499999999999 408.29999999999995 524.8499999999999 407.79999999999995 Q526.7499999999999 407.29999999999995 527.3499999999999 405.79999999999995 Z" fill="#e4e4e4"/>
<text x="527.3499999999999" y="414.4" font-size="4.1" font-weight="bold" fill="#e0e0e0" text-anchor="middle" textLength="7.3" lengthAdjust="spacingAndGlyphs">SVG</text>
<path d="M542.65 405.79999999999995 Q543.25 407.29999999999995 545.15 407.79999999999995 Q543.25 408.29999999999995 542.65 409.79999999999995 Q542.05 408.29999999999995 540.15 407.79999999999995 Q542.05 407.29999999999995 542.65 405.79999999999995 Z" fill="#e4e4e4"/>
<text x="542.65" y="414.4" font-size="4.1" font-weight="bold" fill="#e0e0e0" text-anchor="middle" textLength="7.3" lengthAdjust="spacingAndGlyphs">PNG</text>
<line x1="72.2" y1="530.9" x2="546" y2="530.9" stroke="#2d2d2f" stroke-width="0.7"/>
<line x1="69.2" y1="530.9" x2="72.2" y2="530.9" stroke="#777" stroke-width="0.6"/>
<text x="67.7" y="532.5" font-size="4.9" fill="#a8a8a8" text-anchor="end">0</text>
<line x1="72.2" y1="509.8" x2="546" y2="509.8" stroke="#2d2d2f" stroke-width="0.7"/>
<line x1="69.2" y1="509.8" x2="72.2" y2="509.8" stroke="#777" stroke-width="0.6"/>
<text x="67.7" y="511.4" font-size="4.9" fill="#a8a8a8" text-anchor="end">600</text>
<line x1="72.2" y1="488.6" x2="546" y2="488.6" stroke="#2d2d2f" stroke-width="0.7"/>
<line x1="69.2" y1="488.6" x2="72.2" y2="488.6" stroke="#777" stroke-width="0.6"/>
<text x="67.7" y="490.2" font-size="4.9" fill="#a8a8a8" text-anchor="end">1,200</text>
<line x1="72.2" y1="467.5" x2="546" y2="467.5" stroke="#2d2d2f" stroke-width="0.7"/>
<line x1="69.2" y1="467.5" x2="72.2" y2="467.5" stroke="#777" stroke-width="0.6"/>
<text x="67.7" y="469.1" font-size="4.9" fill="#a8a8a8" text-anchor="end">1,800</text>
<line x1="72.2" y1="446.3" x2="546" y2="446.3" stroke="#2d2d2f" stroke-width="0.7"/>
<line x1="69.2" y1="446.3" x2="72.2" y2="446.3" stroke="#777" stroke-width="0.6"/>
<text x="67.7" y="447.9" font-size="4.9" fill="#a8a8a8" text-anchor="end">2,400</text>
<line x1="72.2" y1="425.2" x2="546" y2="425.2" stroke="#2d2d2f" stroke-width="0.7"/>
<line x1="69.2" y1="425.2" x2="72.2" y2="425.2" stroke="#777" stroke-width="0.6"/>
<text x="67.7" y="426.8" font-size="4.9" fill="#a8a8a8" text-anchor="end">3,000</text>
<line x1="72.2" y1="425.2" x2="72.2" y2="532.9" stroke="#666" stroke-width="0.7"/>
<line x1="72.2" y1="530.9" x2="546" y2="530.9" stroke="#555" stroke-width="0.7"/>
<line x1="72.2" y1="530.9" x2="72.2" y2="533.4" stroke="#777" stroke-width="0.6"/>
<line x1="229.5" y1="530.9" x2="229.5" y2="533.4" stroke="#777" stroke-width="0.6"/>
<line x1="387.3" y1="530.9" x2="387.3" y2="533.4" stroke="#777" stroke-width="0.6"/>
<line x1="545.9" y1="530.9" x2="545.9" y2="533.4" stroke="#777" stroke-width="0.6"/>
<text transform="translate(49.6 478.04999999999995) rotate(-90)" font-size="4.9" fill="#d0d0d0" text-anchor="middle" font-weight="bold">Engine Operating Hours [ h ]</text>
<rect x="114.3" y="441" width="71.5" height="89.9" fill="#109f6e"/>
<text x="150.05" y="489.8" font-size="5.4" fill="#f0f0f0" text-anchor="middle">2,550.7</text>
<rect x="272.8" y="477.1" width="71.5" height="53.8" fill="#1567b3"/>
<text x="308.55" y="507.8" font-size="5.4" fill="#f0f0f0" text-anchor="middle">1,525</text>
<rect x="430.7" y="494.4" width="71.5" height="36.5" fill="#df940e"/>
<text x="466.45" y="516.4" font-size="5.4" fill="#f0f0f0" text-anchor="middle">1,025.7</text>
<circle cx="72.6" cy="547" r="2.6" fill="#12a675"/>
<text x="76.3" y="548.8" font-size="5.35" fill="#dadada">Engine Operating Hours</text>
<circle cx="141.2" cy="547" r="2.6" fill="#156ec4"/>
<text x="144.9" y="548.8" font-size="5.35" fill="#dadada">Actual Operating Hours</text>
<circle cx="207.8" cy="547" r="2.6" fill="#eaa516"/>
<text x="211.6" y="548.8" font-size="5.35" fill="#dadada">Idle Non Operating Hours</text>
<circle cx="1064.8" cy="386.5" r="3.1" fill="#efd20a"/><rect x="1064.3999999999999" y="386.2" width="0.8" height="1.8" fill="#6a5a00"/><rect x="1064.3999999999999" y="385.0" width="0.8" height="0.7" fill="#6a5a00"/>
<g transform="translate(1077.8,383)" fill="none" stroke="#e6cf18" stroke-width="1.1"><path d="M0.5 2.6 V0.5 H2.6 M4.6 0.5 H6.7 V2.6 M6.7 4.6 V6.7 H4.6 M2.6 6.7 H0.5 V4.6"/></g>
<rect x="997.8" y="405.3" width="13.6" height="14" rx="1.5" fill="#1b1b1c" stroke="#2c2c2e" stroke-width="0.8"/>
<g transform="translate(1001.3,409.0)" fill="none" stroke="#d6d6d6" stroke-width="1"><path d="M0.6 0 V7"/><path d="M2.6 2.2 H5 C6.8 2.2 6.8 6.2 5 6.2 H3"/><path d="M3.8 0.9 L2.4 2.2 L3.8 3.5"/></g>
<rect x="1016.5" y="405.3" width="14.9" height="14" rx="1.5" fill="#34331c" stroke="#3e3d22" stroke-width="0.8"/>
<path d="M1020.1 409.3 V415.3 M1027.9 409.3 V415.3 M1021.4 412.3 H1026.6" stroke="#efd20a" stroke-width="0.9"/><path d="M1021 412.3 L1022.5 411.1 V413.5Z M1027 412.3 L1025.5 411.1 V413.5Z" fill="#efd20a"/>
<rect x="1035.9" y="405.3" width="44.900000000000006" height="14" rx="1.5" fill="#1b1b1c" stroke="#2c2c2e" stroke-width="0.8"/>
<line x1="1050.7" y1="405.8" x2="1050.7" y2="418.8" stroke="#2c2c2e" stroke-width="0.8"/>
<line x1="1066.0" y1="405.8" x2="1066.0" y2="418.8" stroke="#2c2c2e" stroke-width="0.8"/>
<path d="M1043.0500000000002 407.7 Q1043.65 409.2 1045.5500000000002 409.7 Q1043.65 410.2 1043.0500000000002 411.7 Q1042.4500000000003 410.2 1040.5500000000002 409.7 Q1042.4500000000003 409.2 1043.0500000000002 407.7 Z" fill="#e4e4e4"/>
<text x="1043.0500000000002" y="416.3" font-size="4.1" font-weight="bold" fill="#e0e0e0" text-anchor="middle" textLength="7.3" lengthAdjust="spacingAndGlyphs">CSV</text>
<path d="M1058.3500000000001 407.7 Q1058.95 409.2 1060.8500000000001 409.7 Q1058.95 410.2 1058.3500000000001 411.7 Q1057.7500000000002 410.2 1055.8500000000001 409.7 Q1057.7500000000002 409.2 1058.3500000000001 407.7 Z" fill="#e4e4e4"/>
<text x="1058.3500000000001" y="416.3" font-size="4.1" font-weight="bold" fill="#e0e0e0" text-anchor="middle" textLength="7.3" lengthAdjust="spacingAndGlyphs">SVG</text>
<path d="M1073.65 407.7 Q1074.25 409.2 1076.15 409.7 Q1074.25 410.2 1073.65 411.7 Q1073.0500000000002 410.2 1071.15 409.7 Q1073.0500000000002 409.2 1073.65 407.7 Z" fill="#e4e4e4"/>
<text x="1073.65" y="416.3" font-size="4.1" font-weight="bold" fill="#e0e0e0" text-anchor="middle" textLength="7.3" lengthAdjust="spacingAndGlyphs">PNG</text>
<line x1="596.2" y1="427.4" x2="596.2" y2="534.1" stroke="#2d2d2f" stroke-width="0.6"/>
<line x1="596.2" y1="534.1" x2="596.2" y2="536.6" stroke="#888" stroke-width="0.6"/>
<text x="596.2" y="545.1" font-size="5.3" fill="#bdbdbd" text-anchor="middle">0</text>
<line x1="635.9" y1="427.4" x2="635.9" y2="534.1" stroke="#2d2d2f" stroke-width="0.6"/>
<line x1="635.9" y1="534.1" x2="635.9" y2="536.6" stroke="#888" stroke-width="0.6"/>
<text x="635.9" y="545.1" font-size="5.3" fill="#bdbdbd" text-anchor="middle">8</text>
<line x1="675.6" y1="427.4" x2="675.6" y2="534.1" stroke="#2d2d2f" stroke-width="0.6"/>
<line x1="675.6" y1="534.1" x2="675.6" y2="536.6" stroke="#888" stroke-width="0.6"/>
<text x="675.6" y="545.1" font-size="5.3" fill="#bdbdbd" text-anchor="middle">17</text>
<line x1="715.3" y1="427.4" x2="715.3" y2="534.1" stroke="#2d2d2f" stroke-width="0.6"/>
<line x1="715.3" y1="534.1" x2="715.3" y2="536.6" stroke="#888" stroke-width="0.6"/>
<text x="715.3" y="545.1" font-size="5.3" fill="#bdbdbd" text-anchor="middle">25</text>
<line x1="755.0" y1="427.4" x2="755.0" y2="534.1" stroke="#2d2d2f" stroke-width="0.6"/>
<line x1="755.0" y1="534.1" x2="755.0" y2="536.6" stroke="#888" stroke-width="0.6"/>
<text x="755.0" y="545.1" font-size="5.3" fill="#bdbdbd" text-anchor="middle">33</text>
<line x1="794.7" y1="427.4" x2="794.7" y2="534.1" stroke="#2d2d2f" stroke-width="0.6"/>
<line x1="794.7" y1="534.1" x2="794.7" y2="536.6" stroke="#888" stroke-width="0.6"/>
<text x="794.7" y="545.1" font-size="5.3" fill="#bdbdbd" text-anchor="middle">42</text>
<line x1="834.4" y1="427.4" x2="834.4" y2="534.1" stroke="#2d2d2f" stroke-width="0.6"/>
<line x1="834.4" y1="534.1" x2="834.4" y2="536.6" stroke="#888" stroke-width="0.6"/>
<text x="834.4" y="545.1" font-size="5.3" fill="#bdbdbd" text-anchor="middle">50</text>
<line x1="874.1" y1="427.4" x2="874.1" y2="534.1" stroke="#2d2d2f" stroke-width="0.6"/>
<line x1="874.1" y1="534.1" x2="874.1" y2="536.6" stroke="#888" stroke-width="0.6"/>
<text x="874.1" y="545.1" font-size="5.3" fill="#bdbdbd" text-anchor="middle">58</text>
<line x1="913.8" y1="427.4" x2="913.8" y2="534.1" stroke="#2d2d2f" stroke-width="0.6"/>
<line x1="913.8" y1="534.1" x2="913.8" y2="536.6" stroke="#888" stroke-width="0.6"/>
<text x="913.8" y="545.1" font-size="5.3" fill="#bdbdbd" text-anchor="middle">67</text>
<line x1="953.5" y1="427.4" x2="953.5" y2="534.1" stroke="#2d2d2f" stroke-width="0.6"/>
<line x1="953.5" y1="534.1" x2="953.5" y2="536.6" stroke="#888" stroke-width="0.6"/>
<text x="953.5" y="545.1" font-size="5.3" fill="#bdbdbd" text-anchor="middle">75</text>
<line x1="993.2" y1="427.4" x2="993.2" y2="534.1" stroke="#2d2d2f" stroke-width="0.6"/>
<line x1="993.2" y1="534.1" x2="993.2" y2="536.6" stroke="#888" stroke-width="0.6"/>
<text x="993.2" y="545.1" font-size="5.3" fill="#bdbdbd" text-anchor="middle">83</text>
<line x1="1032.9" y1="427.4" x2="1032.9" y2="534.1" stroke="#2d2d2f" stroke-width="0.6"/>
<line x1="1032.9" y1="534.1" x2="1032.9" y2="536.6" stroke="#888" stroke-width="0.6"/>
<text x="1032.9" y="545.1" font-size="5.3" fill="#bdbdbd" text-anchor="middle">92</text>
<line x1="1072.6" y1="427.4" x2="1072.6" y2="534.1" stroke="#2d2d2f" stroke-width="0.6"/>
<line x1="1072.6" y1="534.1" x2="1072.6" y2="536.6" stroke="#888" stroke-width="0.6"/>
<text x="1072.6" y="545.1" font-size="5.3" fill="#bdbdbd" text-anchor="middle">100</text>
<line x1="596.2" y1="534.1" x2="1072.6" y2="534.1" stroke="#2d2d2f" stroke-width="0.6"/>
<line x1="593.2" y1="534.1" x2="596.2" y2="534.1" stroke="#1c9a6c" stroke-width="0.6"/>
<text x="592.2" y="535.7" font-size="4.9" fill="#1c9a6c" text-anchor="end">0</text>
<line x1="596.2" y1="512.8" x2="1072.6" y2="512.8" stroke="#2d2d2f" stroke-width="0.6"/>
<line x1="593.2" y1="512.8" x2="596.2" y2="512.8" stroke="#1c9a6c" stroke-width="0.6"/>
<text x="592.2" y="514.4" font-size="4.9" fill="#1c9a6c" text-anchor="end">10</text>
<line x1="596.2" y1="491.4" x2="1072.6" y2="491.4" stroke="#2d2d2f" stroke-width="0.6"/>
<line x1="593.2" y1="491.4" x2="596.2" y2="491.4" stroke="#1c9a6c" stroke-width="0.6"/>
<text x="592.2" y="493.0" font-size="4.9" fill="#1c9a6c" text-anchor="end">20</text>
<line x1="596.2" y1="470.1" x2="1072.6" y2="470.1" stroke="#2d2d2f" stroke-width="0.6"/>
<line x1="593.2" y1="470.1" x2="596.2" y2="470.1" stroke="#1c9a6c" stroke-width="0.6"/>
<text x="592.2" y="471.7" font-size="4.9" fill="#1c9a6c" text-anchor="end">30</text>
<line x1="596.2" y1="448.7" x2="1072.6" y2="448.7" stroke="#2d2d2f" stroke-width="0.6"/>
<line x1="593.2" y1="448.7" x2="596.2" y2="448.7" stroke="#1c9a6c" stroke-width="0.6"/>
<text x="592.2" y="450.3" font-size="4.9" fill="#1c9a6c" text-anchor="end">40</text>
<line x1="596.2" y1="427.4" x2="1072.6" y2="427.4" stroke="#2d2d2f" stroke-width="0.6"/>
<line x1="593.2" y1="427.4" x2="596.2" y2="427.4" stroke="#1c9a6c" stroke-width="0.6"/>
<text x="592.2" y="429.0" font-size="4.9" fill="#1c9a6c" text-anchor="end">50</text>
<line x1="596.2" y1="427.4" x2="596.2" y2="534.1" stroke="#1c9a6c" stroke-width="0.8"/>
<line x1="596.2" y1="534.1" x2="1072.6" y2="534.1" stroke="#666" stroke-width="0.6"/>
<text transform="translate(579.6 480.75) rotate(-90)" font-size="4.9" fill="#1c9a6c" text-anchor="middle">Fuel Consumption [ l / h ]</text>
<text x="834.4" y="552.9" font-size="5.4" font-weight="bold" fill="#e0e0e0" text-anchor="middle">Operation Rate [ % ]</text>
<circle cx="596.2" cy="491" r="2.6" fill="#19a875" stroke="#0f2a1f" stroke-width="0.45"/>
<circle cx="596.2" cy="526" r="2.6" fill="#19a875" stroke="#0f2a1f" stroke-width="0.45"/>
<circle cx="596.2" cy="533.7" r="2.6" fill="#19a875" stroke="#0f2a1f" stroke-width="0.45"/>
<circle cx="611.7" cy="530.4" r="2.6" fill="#19a875" stroke="#0f2a1f" stroke-width="0.45"/>
<circle cx="617" cy="533.7" r="2.6" fill="#19a875" stroke="#0f2a1f" stroke-width="0.45"/>
<circle cx="641.4" cy="501.1" r="2.6" fill="#19a875" stroke="#0f2a1f" stroke-width="0.45"/>
<circle cx="658" cy="526.8" r="2.6" fill="#19a875" stroke="#0f2a1f" stroke-width="0.45"/>
<circle cx="664.3" cy="515.6" r="2.6" fill="#19a875" stroke="#0f2a1f" stroke-width="0.45"/>
<circle cx="689.7" cy="526" r="2.6" fill="#19a875" stroke="#0f2a1f" stroke-width="0.45"/>
<circle cx="697.5" cy="523" r="2.6" fill="#19a875" stroke="#0f2a1f" stroke-width="0.45"/>
<circle cx="701.3" cy="524.6" r="2.6" fill="#19a875" stroke="#0f2a1f" stroke-width="0.45"/>
<circle cx="704.1" cy="495.3" r="2.6" fill="#19a875" stroke="#0f2a1f" stroke-width="0.45"/>
<circle cx="704.6" cy="519.7" r="2.6" fill="#19a875" stroke="#0f2a1f" stroke-width="0.45"/>
<circle cx="719.4" cy="518.2" r="2.6" fill="#19a875" stroke="#0f2a1f" stroke-width="0.45"/>
<circle cx="724" cy="516.5" r="2.6" fill="#19a875" stroke="#0f2a1f" stroke-width="0.45"/>
<circle cx="730.6" cy="515.9" r="2.6" fill="#19a875" stroke="#0f2a1f" stroke-width="0.45"/>
<circle cx="725" cy="521.5" r="2.6" fill="#19a875" stroke="#0f2a1f" stroke-width="0.45"/>
<circle cx="723" cy="527" r="2.6" fill="#19a875" stroke="#0f2a1f" stroke-width="0.45"/>
<circle cx="727" cy="524" r="2.6" fill="#19a875" stroke="#0f2a1f" stroke-width="0.45"/>
<circle cx="731.3" cy="521.2" r="2.6" fill="#19a875" stroke="#0f2a1f" stroke-width="0.45"/>
<circle cx="738.7" cy="512.5" r="2.6" fill="#19a875" stroke="#0f2a1f" stroke-width="0.45"/>
<circle cx="736.3" cy="524.5" r="2.6" fill="#19a875" stroke="#0f2a1f" stroke-width="0.45"/>
<circle cx="740.2" cy="523.9" r="2.6" fill="#19a875" stroke="#0f2a1f" stroke-width="0.45"/>
<circle cx="742.2" cy="523.5" r="2.6" fill="#19a875" stroke="#0f2a1f" stroke-width="0.45"/>
<circle cx="750.9" cy="518.2" r="2.6" fill="#19a875" stroke="#0f2a1f" stroke-width="0.45"/>
<circle cx="754.5" cy="516" r="2.6" fill="#19a875" stroke="#0f2a1f" stroke-width="0.45"/>
<circle cx="755.3" cy="522.9" r="2.6" fill="#19a875" stroke="#0f2a1f" stroke-width="0.45"/>
<circle cx="752.3" cy="527.5" r="2.6" fill="#19a875" stroke="#0f2a1f" stroke-width="0.45"/>
<circle cx="761.5" cy="521.5" r="2.6" fill="#19a875" stroke="#0f2a1f" stroke-width="0.45"/>
<circle cx="765.4" cy="524.2" r="2.6" fill="#19a875" stroke="#0f2a1f" stroke-width="0.45"/>
<circle cx="768.6" cy="515.7" r="2.6" fill="#19a875" stroke="#0f2a1f" stroke-width="0.45"/>
<circle cx="770.9" cy="521.4" r="2.6" fill="#19a875" stroke="#0f2a1f" stroke-width="0.45"/>
<circle cx="774.5" cy="516.5" r="2.6" fill="#19a875" stroke="#0f2a1f" stroke-width="0.45"/>
<circle cx="777" cy="517.3" r="2.6" fill="#19a875" stroke="#0f2a1f" stroke-width="0.45"/>
<circle cx="774.6" cy="533.8" r="2.6" fill="#19a875" stroke="#0f2a1f" stroke-width="0.45"/>
<circle cx="784.5" cy="520.6" r="2.6" fill="#19a875" stroke="#0f2a1f" stroke-width="0.45"/>
<circle cx="790.3" cy="497.7" r="2.6" fill="#19a875" stroke="#0f2a1f" stroke-width="0.45"/>
<circle cx="800.2" cy="507.3" r="2.6" fill="#19a875" stroke="#0f2a1f" stroke-width="0.45"/>
<circle cx="794" cy="516.5" r="2.6" fill="#19a875" stroke="#0f2a1f" stroke-width="0.45"/>
<circle cx="795" cy="521" r="2.6" fill="#19a875" stroke="#0f2a1f" stroke-width="0.45"/>
<circle cx="798" cy="522" r="2.6" fill="#19a875" stroke="#0f2a1f" stroke-width="0.45"/>
<circle cx="799.5" cy="523.8" r="2.6" fill="#19a875" stroke="#0f2a1f" stroke-width="0.45"/>
<circle cx="803.5" cy="518.3" r="2.6" fill="#19a875" stroke="#0f2a1f" stroke-width="0.45"/>
<circle cx="806" cy="521.5" r="2.6" fill="#19a875" stroke="#0f2a1f" stroke-width="0.45"/>
<circle cx="811.3" cy="518.8" r="2.6" fill="#19a875" stroke="#0f2a1f" stroke-width="0.45"/>
<circle cx="812.4" cy="533.8" r="2.6" fill="#19a875" stroke="#0f2a1f" stroke-width="0.45"/>
<circle cx="818.2" cy="521.2" r="2.6" fill="#19a875" stroke="#0f2a1f" stroke-width="0.45"/>
<circle cx="823.8" cy="515.1" r="2.6" fill="#19a875" stroke="#0f2a1f" stroke-width="0.45"/>
<circle cx="830.5" cy="518.9" r="2.6" fill="#19a875" stroke="#0f2a1f" stroke-width="0.45"/>
<circle cx="834.3" cy="512.6" r="2.6" fill="#19a875" stroke="#0f2a1f" stroke-width="0.45"/>
<circle cx="834.3" cy="534.1" r="2.6" fill="#19a875" stroke="#0f2a1f" stroke-width="0.45"/>
<circle cx="839" cy="519.8" r="2.6" fill="#19a875" stroke="#0f2a1f" stroke-width="0.45"/>
<circle cx="840.9" cy="517" r="2.6" fill="#19a875" stroke="#0f2a1f" stroke-width="0.45"/>
<circle cx="844.3" cy="510.3" r="2.6" fill="#19a875" stroke="#0f2a1f" stroke-width="0.45"/>
<circle cx="845.7" cy="517" r="2.6" fill="#19a875" stroke="#0f2a1f" stroke-width="0.45"/>
<circle cx="851.4" cy="498" r="2.6" fill="#19a875" stroke="#0f2a1f" stroke-width="0.45"/>
<circle cx="852.3" cy="513.2" r="2.6" fill="#19a875" stroke="#0f2a1f" stroke-width="0.45"/>
<circle cx="852.3" cy="524.2" r="2.6" fill="#19a875" stroke="#0f2a1f" stroke-width="0.45"/>
<circle cx="854.2" cy="518" r="2.6" fill="#19a875" stroke="#0f2a1f" stroke-width="0.45"/>
<circle cx="855.2" cy="488.1" r="2.6" fill="#19a875" stroke="#0f2a1f" stroke-width="0.45"/>
<circle cx="858" cy="509.4" r="2.6" fill="#19a875" stroke="#0f2a1f" stroke-width="0.45"/>
<circle cx="859.9" cy="517" r="2.6" fill="#19a875" stroke="#0f2a1f" stroke-width="0.45"/>
<circle cx="861.8" cy="534.1" r="2.6" fill="#19a875" stroke="#0f2a1f" stroke-width="0.45"/>
<circle cx="866.6" cy="518" r="2.6" fill="#19a875" stroke="#0f2a1f" stroke-width="0.45"/>
<circle cx="869.1" cy="507.1" r="2.6" fill="#19a875" stroke="#0f2a1f" stroke-width="0.45"/>
<circle cx="870.4" cy="517" r="2.6" fill="#19a875" stroke="#0f2a1f" stroke-width="0.45"/>
<circle cx="873.3" cy="534.1" r="2.6" fill="#19a875" stroke="#0f2a1f" stroke-width="0.45"/>
<circle cx="875.2" cy="518" r="2.6" fill="#19a875" stroke="#0f2a1f" stroke-width="0.45"/>
<circle cx="876.7" cy="523.7" r="2.6" fill="#19a875" stroke="#0f2a1f" stroke-width="0.45"/>
<circle cx="877.1" cy="534.1" r="2.6" fill="#19a875" stroke="#0f2a1f" stroke-width="0.45"/>
<circle cx="879" cy="515.1" r="2.6" fill="#19a875" stroke="#0f2a1f" stroke-width="0.45"/>
<circle cx="879.9" cy="507.5" r="2.6" fill="#19a875" stroke="#0f2a1f" stroke-width="0.45"/>
<circle cx="885.6" cy="509.4" r="2.6" fill="#19a875" stroke="#0f2a1f" stroke-width="0.45"/>
<circle cx="886.6" cy="519.8" r="2.6" fill="#19a875" stroke="#0f2a1f" stroke-width="0.45"/>
<circle cx="889.4" cy="515.1" r="2.6" fill="#19a875" stroke="#0f2a1f" stroke-width="0.45"/>
<circle cx="889.4" cy="501.8" r="2.6" fill="#19a875" stroke="#0f2a1f" stroke-width="0.45"/>
<circle cx="890" cy="492.3" r="2.6" fill="#19a875" stroke="#0f2a1f" stroke-width="0.45"/>
<circle cx="893.2" cy="503.7" r="2.6" fill="#19a875" stroke="#0f2a1f" stroke-width="0.45"/>
<circle cx="897" cy="491.5" r="2.6" fill="#19a875" stroke="#0f2a1f" stroke-width="0.45"/>
<circle cx="897" cy="534.1" r="2.6" fill="#19a875" stroke="#0f2a1f" stroke-width="0.45"/>
<circle cx="898.9" cy="459" r="2.6" fill="#19a875" stroke="#0f2a1f" stroke-width="0.45"/>
<circle cx="898.9" cy="516" r="2.6" fill="#19a875" stroke="#0f2a1f" stroke-width="0.45"/>
<circle cx="900.8" cy="534.1" r="2.6" fill="#19a875" stroke="#0f2a1f" stroke-width="0.45"/>
<circle cx="900.8" cy="507.5" r="2.6" fill="#19a875" stroke="#0f2a1f" stroke-width="0.45"/>
<circle cx="902.7" cy="479.5" r="2.6" fill="#19a875" stroke="#0f2a1f" stroke-width="0.45"/>
<circle cx="904.6" cy="510.3" r="2.6" fill="#19a875" stroke="#0f2a1f" stroke-width="0.45"/>
<circle cx="904.6" cy="523.7" r="2.6" fill="#19a875" stroke="#0f2a1f" stroke-width="0.45"/>
<circle cx="905.6" cy="501.8" r="2.6" fill="#19a875" stroke="#0f2a1f" stroke-width="0.45"/>
<circle cx="909.4" cy="516" r="2.6" fill="#19a875" stroke="#0f2a1f" stroke-width="0.45"/>
<circle cx="910.3" cy="449.5" r="2.6" fill="#19a875" stroke="#0f2a1f" stroke-width="0.45"/>
<circle cx="911.9" cy="445.3" r="2.6" fill="#19a875" stroke="#0f2a1f" stroke-width="0.45"/>
<circle cx="913.6" cy="505.6" r="2.6" fill="#19a875" stroke="#0f2a1f" stroke-width="0.45"/>
<circle cx="917" cy="514.1" r="2.6" fill="#19a875" stroke="#0f2a1f" stroke-width="0.45"/>
<circle cx="920.8" cy="514.1" r="2.6" fill="#19a875" stroke="#0f2a1f" stroke-width="0.45"/>
<circle cx="922.7" cy="520.8" r="2.6" fill="#19a875" stroke="#0f2a1f" stroke-width="0.45"/>
<circle cx="924.6" cy="448.5" r="2.6" fill="#19a875" stroke="#0f2a1f" stroke-width="0.45"/>
<circle cx="925.6" cy="501.8" r="2.6" fill="#19a875" stroke="#0f2a1f" stroke-width="0.45"/>
<circle cx="928.4" cy="513.2" r="2.6" fill="#19a875" stroke="#0f2a1f" stroke-width="0.45"/>
<circle cx="929.4" cy="443.2" r="2.6" fill="#19a875" stroke="#0f2a1f" stroke-width="0.45"/>
<circle cx="930.3" cy="498.9" r="2.6" fill="#19a875" stroke="#0f2a1f" stroke-width="0.45"/>
<circle cx="932.2" cy="494.2" r="2.6" fill="#19a875" stroke="#0f2a1f" stroke-width="0.45"/>
<circle cx="937" cy="498" r="2.6" fill="#19a875" stroke="#0f2a1f" stroke-width="0.45"/>
<circle cx="937.9" cy="506.5" r="2.6" fill="#19a875" stroke="#0f2a1f" stroke-width="0.45"/>
<circle cx="940" cy="506.6" r="2.6" fill="#19a875" stroke="#0f2a1f" stroke-width="0.45"/>
<circle cx="943.8" cy="512.6" r="2.6" fill="#19a875" stroke="#0f2a1f" stroke-width="0.45"/>
<circle cx="946.7" cy="510.9" r="2.6" fill="#19a875" stroke="#0f2a1f" stroke-width="0.45"/>
<circle cx="949.1" cy="500.8" r="2.6" fill="#19a875" stroke="#0f2a1f" stroke-width="0.45"/>
<circle cx="951.8" cy="488.1" r="2.6" fill="#19a875" stroke="#0f2a1f" stroke-width="0.45"/>
<circle cx="953.3" cy="507.5" r="2.6" fill="#19a875" stroke="#0f2a1f" stroke-width="0.45"/>
<circle cx="953.3" cy="512.6" r="2.6" fill="#19a875" stroke="#0f2a1f" stroke-width="0.45"/>
<circle cx="953.3" cy="516.1" r="2.6" fill="#19a875" stroke="#0f2a1f" stroke-width="0.45"/>
<circle cx="957.1" cy="488.9" r="2.6" fill="#19a875" stroke="#0f2a1f" stroke-width="0.45"/>
<circle cx="959" cy="509.4" r="2.6" fill="#19a875" stroke="#0f2a1f" stroke-width="0.45"/>
<circle cx="961.3" cy="498" r="2.6" fill="#19a875" stroke="#0f2a1f" stroke-width="0.45"/>
<circle cx="961.9" cy="503.7" r="2.6" fill="#19a875" stroke="#0f2a1f" stroke-width="0.45"/>
<circle cx="962.8" cy="508.5" r="2.6" fill="#19a875" stroke="#0f2a1f" stroke-width="0.45"/>
<circle cx="964.7" cy="508.5" r="2.6" fill="#19a875" stroke="#0f2a1f" stroke-width="0.45"/>
<circle cx="965.7" cy="533.8" r="2.6" fill="#19a875" stroke="#0f2a1f" stroke-width="0.45"/>
<circle cx="969.5" cy="459.4" r="2.6" fill="#19a875" stroke="#0f2a1f" stroke-width="0.45"/>
<circle cx="973.3" cy="502.7" r="2.6" fill="#19a875" stroke="#0f2a1f" stroke-width="0.45"/>
<circle cx="973.3" cy="524.6" r="2.6" fill="#19a875" stroke="#0f2a1f" stroke-width="0.45"/>
<circle cx="974.2" cy="510.4" r="2.6" fill="#19a875" stroke="#0f2a1f" stroke-width="0.45"/>
<circle cx="978" cy="511.9" r="2.6" fill="#19a875" stroke="#0f2a1f" stroke-width="0.45"/>
<circle cx="982.8" cy="498" r="2.6" fill="#19a875" stroke="#0f2a1f" stroke-width="0.45"/>
<circle cx="983.4" cy="507.5" r="2.6" fill="#19a875" stroke="#0f2a1f" stroke-width="0.45"/>
<circle cx="985.7" cy="494.2" r="2.6" fill="#19a875" stroke="#0f2a1f" stroke-width="0.45"/>
<circle cx="987.2" cy="487.1" r="2.6" fill="#19a875" stroke="#0f2a1f" stroke-width="0.45"/>
<circle cx="987.2" cy="518.9" r="2.6" fill="#19a875" stroke="#0f2a1f" stroke-width="0.45"/>
<circle cx="990.4" cy="516.1" r="2.6" fill="#19a875" stroke="#0f2a1f" stroke-width="0.45"/>
<circle cx="993.3" cy="507.9" r="2.6" fill="#19a875" stroke="#0f2a1f" stroke-width="0.45"/>
<circle cx="994.2" cy="512.3" r="2.6" fill="#19a875" stroke="#0f2a1f" stroke-width="0.45"/>
<circle cx="996.5" cy="490" r="2.6" fill="#19a875" stroke="#0f2a1f" stroke-width="0.45"/>
<circle cx="998.6" cy="508.5" r="2.6" fill="#19a875" stroke="#0f2a1f" stroke-width="0.45"/>
<circle cx="1000.9" cy="512.8" r="2.6" fill="#19a875" stroke="#0f2a1f" stroke-width="0.45"/>
<circle cx="1001.3" cy="533.8" r="2.6" fill="#19a875" stroke="#0f2a1f" stroke-width="0.45"/>
<circle cx="1018.9" cy="506.6" r="2.6" fill="#19a875" stroke="#0f2a1f" stroke-width="0.45"/>
<circle cx="1021.8" cy="508.5" r="2.6" fill="#19a875" stroke="#0f2a1f" stroke-width="0.45"/>
<circle cx="1020" cy="510.9" r="2.6" fill="#19a875" stroke="#0f2a1f" stroke-width="0.45"/>
<circle cx="1025.2" cy="520.4" r="2.6" fill="#19a875" stroke="#0f2a1f" stroke-width="0.45"/>
<circle cx="1058.3" cy="533.8" r="2.6" fill="#19a875" stroke="#0f2a1f" stroke-width="0.45"/>
<circle cx="1072.4" cy="427.6" r="2.6" fill="#19a875" stroke="#0f2a1f" stroke-width="0.45"/>
<circle cx="1072.4" cy="463.2" r="2.6" fill="#19a875" stroke="#0f2a1f" stroke-width="0.45"/>
<circle cx="1072.4" cy="491.3" r="2.6" fill="#19a875" stroke="#0f2a1f" stroke-width="0.45"/>
<circle cx="1072.4" cy="501.8" r="2.6" fill="#19a875" stroke="#0f2a1f" stroke-width="0.45"/>
<circle cx="1072.4" cy="504.1" r="2.6" fill="#19a875" stroke="#0f2a1f" stroke-width="0.45"/>
<circle cx="1072.4" cy="512.3" r="2.6" fill="#19a875" stroke="#0f2a1f" stroke-width="0.45"/>
<circle cx="1072.4" cy="515.1" r="2.6" fill="#19a875" stroke="#0f2a1f" stroke-width="0.45"/>
<circle cx="1072.4" cy="533.8" r="2.6" fill="#19a875" stroke="#0f2a1f" stroke-width="0.45"/>
<circle cx="724.5" cy="523" r="2.6" fill="#19a875" stroke="#0f2a1f" stroke-width="0.45"/>
<circle cx="727" cy="525.5" r="2.6" fill="#19a875" stroke="#0f2a1f" stroke-width="0.45"/>
<circle cx="732" cy="520.5" r="2.6" fill="#19a875" stroke="#0f2a1f" stroke-width="0.45"/>
<circle cx="736" cy="525.5" r="2.6" fill="#19a875" stroke="#0f2a1f" stroke-width="0.45"/>
<circle cx="738.5" cy="524.5" r="2.6" fill="#19a875" stroke="#0f2a1f" stroke-width="0.45"/>
<circle cx="822.8" cy="519" r="2.6" fill="#19a875" stroke="#0f2a1f" stroke-width="0.45"/>
<circle cx="825" cy="516.5" r="2.6" fill="#19a875" stroke="#0f2a1f" stroke-width="0.45"/>
<circle cx="831.5" cy="517.2" r="2.6" fill="#19a875" stroke="#0f2a1f" stroke-width="0.45"/>
<circle cx="833.5" cy="518.5" r="2.6" fill="#19a875" stroke="#0f2a1f" stroke-width="0.45"/>
<circle cx="841.9" cy="518.1" r="2.6" fill="#19a875" stroke="#0f2a1f" stroke-width="0.45"/>
<circle cx="845.2" cy="516.2" r="2.6" fill="#19a875" stroke="#0f2a1f" stroke-width="0.45"/>
<circle cx="851.4" cy="520" r="2.6" fill="#19a875" stroke="#0f2a1f" stroke-width="0.45"/>
<circle cx="854.3" cy="519" r="2.6" fill="#19a875" stroke="#0f2a1f" stroke-width="0.45"/>
<circle cx="856.2" cy="518.1" r="2.6" fill="#19a875" stroke="#0f2a1f" stroke-width="0.45"/>
<circle cx="867.6" cy="517.6" r="2.6" fill="#19a875" stroke="#0f2a1f" stroke-width="0.45"/>
<circle cx="871.4" cy="518.1" r="2.6" fill="#19a875" stroke="#0f2a1f" stroke-width="0.45"/>
<circle cx="877.1" cy="515.2" r="2.6" fill="#19a875" stroke="#0f2a1f" stroke-width="0.45"/>
<circle cx="879" cy="511.4" r="2.6" fill="#19a875" stroke="#0f2a1f" stroke-width="0.45"/>
<circle cx="880" cy="508.5" r="2.6" fill="#19a875" stroke="#0f2a1f" stroke-width="0.45"/>
<circle cx="886.6" cy="510.4" r="2.6" fill="#19a875" stroke="#0f2a1f" stroke-width="0.45"/>
<circle cx="889.5" cy="516.2" r="2.6" fill="#19a875" stroke="#0f2a1f" stroke-width="0.45"/>
<circle cx="890.4" cy="519" r="2.6" fill="#19a875" stroke="#0f2a1f" stroke-width="0.45"/>
<circle cx="885.7" cy="520.9" r="2.6" fill="#19a875" stroke="#0f2a1f" stroke-width="0.45"/>
<circle cx="903.7" cy="516.2" r="2.6" fill="#19a875" stroke="#0f2a1f" stroke-width="0.45"/>
<circle cx="899" cy="534.2" r="2.6" fill="#19a875" stroke="#0f2a1f" stroke-width="0.45"/>
<circle cx="919" cy="514.2" r="2.6" fill="#19a875" stroke="#0f2a1f" stroke-width="0.45"/>
<circle cx="922.8" cy="514.2" r="2.6" fill="#19a875" stroke="#0f2a1f" stroke-width="0.45"/>
<circle cx="929.5" cy="512.3" r="2.6" fill="#19a875" stroke="#0f2a1f" stroke-width="0.45"/>
<circle cx="957" cy="511.4" r="2.6" fill="#19a875" stroke="#0f2a1f" stroke-width="0.45"/>
<circle cx="962.7" cy="510.4" r="2.6" fill="#19a875" stroke="#0f2a1f" stroke-width="0.45"/>
<circle cx="966.5" cy="509.5" r="2.6" fill="#19a875" stroke="#0f2a1f" stroke-width="0.45"/>
<circle cx="977" cy="511.4" r="2.6" fill="#19a875" stroke="#0f2a1f" stroke-width="0.45"/>
<circle cx="978.9" cy="512.3" r="2.6" fill="#19a875" stroke="#0f2a1f" stroke-width="0.45"/>
<circle cx="987.5" cy="495.2" r="2.6" fill="#19a875" stroke="#0f2a1f" stroke-width="0.45"/>
<circle cx="995" cy="510.4" r="2.6" fill="#19a875" stroke="#0f2a1f" stroke-width="0.45"/>
<circle cx="998.9" cy="508.5" r="2.6" fill="#19a875" stroke="#0f2a1f" stroke-width="0.45"/>
<g transform="translate(546.9,574.8)" fill="none" stroke="#e6cf18" stroke-width="1.1"><path d="M0.5 2.6 V0.5 H2.6 M4.6 0.5 H6.7 V2.6 M6.7 4.6 V6.7 H4.6 M2.6 6.7 H0.5 V4.6"/></g>
<rect x="432.1" y="595.1" width="13.6" height="14" rx="1.5" fill="#1b1b1c" stroke="#2c2c2e" stroke-width="0.8"/>
<g transform="translate(435.6,598.8000000000001)" fill="none" stroke="#d6d6d6" stroke-width="1"><path d="M0.6 0 V7"/><path d="M2.6 2.2 H5 C6.8 2.2 6.8 6.2 5 6.2 H3"/><path d="M3.8 0.9 L2.4 2.2 L3.8 3.5"/></g>
<rect x="449.8" y="595.1" width="14.8" height="14" rx="1.5" fill="#1b1b1c" stroke="#2c2c2e" stroke-width="0.8"/>
<rect x="465.6" y="595.1" width="14.8" height="14" rx="1.5" fill="#1b1b1c" stroke="#2c2c2e" stroke-width="0.8"/>
<path d="M454.59999999999997 602.1 H459.8 M457.2 599.5 V604.7" stroke="#dedede" stroke-width="1"/>
<path d="M470.4 602.1 H475.6" stroke="#dedede" stroke-width="1"/>
<rect x="486.0" y="595.1" width="14.9" height="14" rx="1.5" fill="#34331c" stroke="#3e3d22" stroke-width="0.8"/>
<path d="M489.6 599.1 V605.1 M497.4 599.1 V605.1 M490.9 602.1 H496.1" stroke="#efd20a" stroke-width="0.9"/><path d="M490.5 602.1 L492.0 600.9 V603.3000000000001Z M496.5 602.1 L495.0 600.9 V603.3000000000001Z" fill="#efd20a"/>
<rect x="504.5" y="595.1" width="44.900000000000006" height="14" rx="1.5" fill="#1b1b1c" stroke="#2c2c2e" stroke-width="0.8"/>
<line x1="519.3" y1="595.6" x2="519.3" y2="608.6" stroke="#2c2c2e" stroke-width="0.8"/>
<line x1="534.6" y1="595.6" x2="534.6" y2="608.6" stroke="#2c2c2e" stroke-width="0.8"/>
<path d="M511.65 597.5 Q512.25 599.0 514.15 599.5 Q512.25 600.0 511.65 601.5 Q511.04999999999995 600.0 509.15 599.5 Q511.04999999999995 599.0 511.65 597.5 Z" fill="#e4e4e4"/>
<text x="511.65" y="606.1" font-size="4.1" font-weight="bold" fill="#e0e0e0" text-anchor="middle" textLength="7.3" lengthAdjust="spacingAndGlyphs">CSV</text>
<path d="M526.9499999999999 597.5 Q527.55 599.0 529.4499999999999 599.5 Q527.55 600.0 526.9499999999999 601.5 Q526.3499999999999 600.0 524.4499999999999 599.5 Q526.3499999999999 599.0 526.9499999999999 597.5 Z" fill="#e4e4e4"/>
<text x="526.9499999999999" y="606.1" font-size="4.1" font-weight="bold" fill="#e0e0e0" text-anchor="middle" textLength="7.3" lengthAdjust="spacingAndGlyphs">SVG</text>
<path d="M542.25 597.5 Q542.85 599.0 544.75 599.5 Q542.85 600.0 542.25 601.5 Q541.65 600.0 539.75 599.5 Q541.65 599.0 542.25 597.5 Z" fill="#e4e4e4"/>
<text x="542.25" y="606.1" font-size="4.1" font-weight="bold" fill="#e0e0e0" text-anchor="middle" textLength="7.3" lengthAdjust="spacingAndGlyphs">PNG</text>
<line x1="80.6" y1="617" x2="512.5" y2="617" stroke="#2d2d2f" stroke-width="0.7"/>
<line x1="80.6" y1="617" x2="80.6" y2="631" stroke="#1c8a60" stroke-width="0.8"/>
<line x1="77" y1="617" x2="80.6" y2="617" stroke="#1c8a60" stroke-width="0.7"/>
<text x="76" y="618.6" font-size="4.4" fill="#1c9a6c" text-anchor="end">6,000</text>
<line x1="512.5" y1="617" x2="512.5" y2="631" stroke="#1d5c94" stroke-width="0.8"/>
<line x1="512.5" y1="617" x2="515.5" y2="617" stroke="#1d5c94" stroke-width="0.7"/>
<text x="516.6" y="618.6" font-size="4.4" fill="#2d76c0">20,000</text>
<circle cx="1082.8" cy="609.4" r="9" fill="#24220f"/>
<path d="M1079.3 611.8 C1078.6 609.5 1079.6 606.6 1082.2 605.9 C1084.6 605.3 1086.4 607.4 1086.2 609.6 C1086 611.8 1083.8 613.2 1081.8 613 Z" fill="#ecd20c"/><path d="M1077.8 607.6 Q1078.6 605 1081.6 604.2" stroke="#ecd20c" stroke-width="1" fill="none"/><path d="M1087.4 611 Q1086.6 613.8 1083.4 614.4" stroke="#ecd20c" stroke-width="1" fill="none"/><path d="M1084.8 611.6 L1086.4 610.2" stroke="#24220f" stroke-width="0.8"/></svg>
</div>
</body></html>
